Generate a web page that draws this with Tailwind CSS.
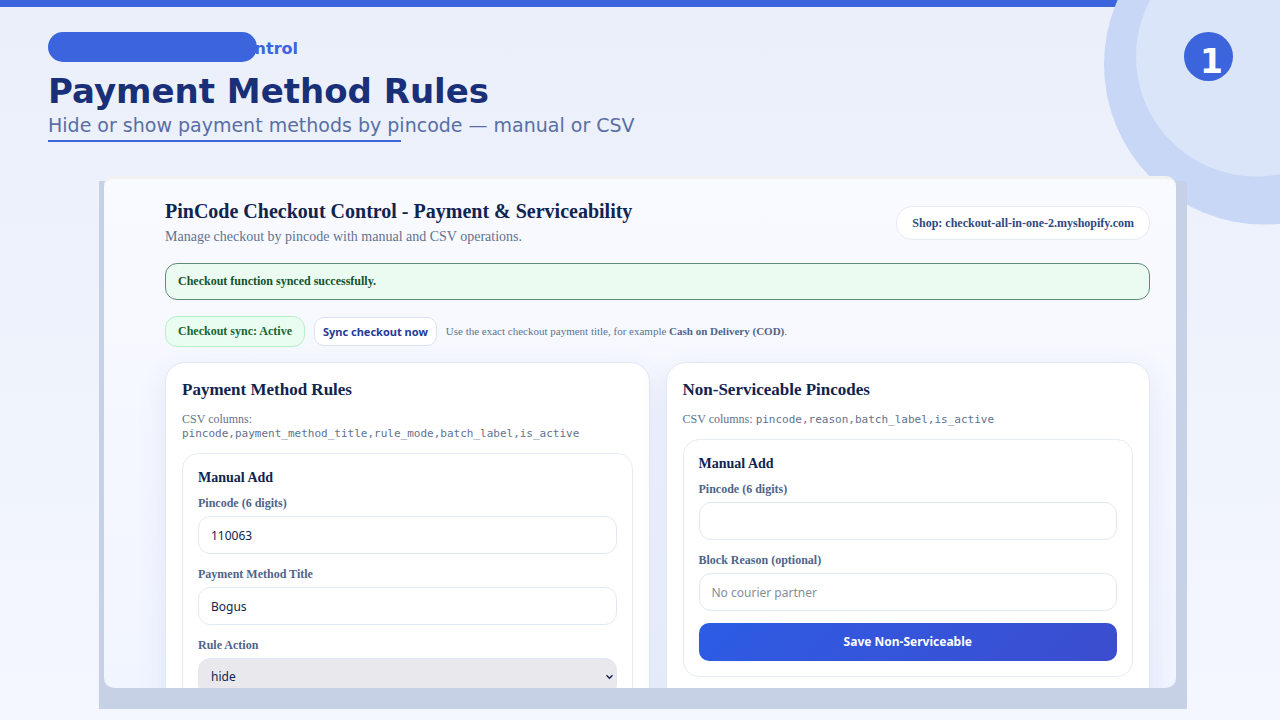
<!DOCTYPE html>
<html lang="en">
<head>
  <meta charset="UTF-8" />
  <meta name="viewport" content="width=device-width, initial-scale=1.0" />
  <title>Payment Method Rules</title>
  <script src="https://cdn.jsdelivr.net/npm/@tailwindcss/browser@4"></script>
</head>
<body class="relative flex flex-col h-screen overflow-hidden bg-linear-to-b from-[#eaeffa] to-[#f4f7ff] font-['DejaVu_Sans',sans-serif]">
  <div class="h-[7px] shrink-0 bg-[#3c64dc]"></div>

  <!-- corner circles -->
  <svg class="absolute top-0 right-0 h-[225px] w-[176px]" viewBox="0 0 176 225">
    <circle cx="160" cy="64.5" r="160" fill="#c8d7f5" />
    <circle cx="152" cy="56.5" r="120" fill="#dae5f9" />
  </svg>
  <div class="absolute top-8 right-[47px] size-[49px] rounded-full bg-[#3c64dc] text-white text-[33px] leading-[60px] font-bold text-center pl-[6px]">1</div>

  <header class="relative px-12 pt-[25px] shrink-0">
    <div class="relative h-[30px] w-[250px]">
      <span class="block text-right text-base leading-[34px] font-bold text-[#3c64dc] whitespace-nowrap">PinCode Checkout Control</span>
      <span class="absolute left-0 top-0 h-[30px] w-[209px] rounded-full bg-[#3c64dc]"></span>
    </div>
    <h1 class="mt-2 text-[34px] leading-[42px] font-bold text-[#192f78]">Payment Method Rules</h1>
    <p class="text-[19px] leading-[26px] text-[#5a6ea5]">Hide or show payment methods by pincode — manual or CSV</p>
    <div class="mt-[2px] h-[2px] w-[353px] bg-[#3c64dc]"></div>
  </header>

  <!-- app window on its backing plate -->
  <div class="relative flex flex-1 min-h-0 mt-[39px] mb-[11px] ml-[99px] mr-[93px] pl-[5px] pr-[11px] pb-[21px] bg-[#c7d1e5]">
    <main class="flex-1 min-w-0 -mt-[5px] overflow-hidden rounded-[10px] border-t-3 border-[#f1f1f0] bg-linear-to-b from-[#f9faff] to-[#f1f5ff] pl-[61px] pr-[26px] pt-5 font-['Liberation_Serif',serif] text-[#10244f]">

      <div class="flex items-center justify-between">
        <div>
          <h2 class="text-xl leading-6 font-bold">PinCode Checkout Control - Payment &amp; Serviceability</h2>
          <p class="mt-1 text-sm leading-5 text-[#61728f]">Manage checkout by pincode with manual and CSV operations.</p>
        </div>
        <div class="rounded-2xl border border-[#e6eaf5] bg-white px-[15px] py-2 text-xs leading-4 font-bold text-[#304a80]">Shop: checkout-all-in-one-2.myshopify.com</div>
      </div>

      <div class="mt-4 rounded-xl border border-[#5f8a74] bg-[#ecfbf1] px-3 py-[10px] text-xs leading-[15px] font-bold text-[#14532d]">Checkout function synced successfully.</div>

      <div class="mt-4 flex items-center gap-[9px]">
        <span class="rounded-xl border border-[#b5efcb] bg-[#eafdf1] px-3 py-[7px] text-xs leading-[15px] font-bold text-[#166534]">Checkout sync: Active</span>
        <button type="button" class="rounded-[10px] border border-[#dbe3f3] bg-white px-2 py-[6px] font-['Noto_Sans',sans-serif] text-[11px] leading-[15px] font-bold text-[#1e3a9a]">Sync checkout now</button>
        <span class="text-[11px] leading-[15px] text-[#61728f]">Use the exact checkout payment title, for example <b class="text-[#50648a]">Cash on Delivery (COD)</b>.</span>
      </div>

      <div class="mt-[15px] grid grid-cols-2 items-start gap-4">
        <section class="rounded-[20px] border border-[#e2e8f5] bg-white px-4 pt-[17px] pb-4 shadow-[0_10px_30px_rgba(60,80,170,0.1)]">
          <h3 class="text-[17px] leading-5 font-bold">Payment Method Rules</h3>
          <p class="mt-3 text-xs leading-[14px] text-[#61728f]">CSV columns:<br /><code class="font-['DejaVu_Sans_Mono',monospace] text-[11px]">pincode,payment_method_title,rule_mode,batch_label,is_active</code></p>
          <form class="mt-3 rounded-2xl border border-[#e6ebf5] px-[15px] pt-4 pb-[15px]">
            <h4 class="text-sm leading-4 font-bold">Manual Add</h4>
            <label for="pincode" class="mt-[9px] block text-xs leading-4 font-bold text-[#50648a]">Pincode (6 digits)</label>
            <input id="pincode" type="text" value="110063" class="mt-[5px] block h-[38px] w-full rounded-xl border border-[#e2e8f3] bg-white px-3 font-['Noto_Sans',sans-serif] text-xs" />
            <label for="method" class="mt-3 block text-xs leading-4 font-bold text-[#50648a]">Payment Method Title</label>
            <input id="method" type="text" value="Bogus" class="mt-[5px] block h-[38px] w-full rounded-xl border border-[#e2e8f3] bg-white px-3 font-['Noto_Sans',sans-serif] text-xs" />
            <label for="action" class="mt-3 block text-xs leading-4 font-bold text-[#50648a]">Rule Action</label>
            <div class="relative mt-[5px]">
              <select id="action" class="block h-[38px] w-full appearance-none rounded-xl border border-[#e2e8f3] bg-[#e8e8ed] px-3 font-['Noto_Sans',sans-serif] text-xs">
                <option>hide</option>
                <option>show</option>
              </select>
              <svg class="pointer-events-none absolute right-1 top-4 h-[6px] w-[7px]" viewBox="0 0 7 6" fill="none" stroke="#10244f" stroke-width="1.4"><path d="M.5 1.2 3.5 4.2 6.5 1.2" /></svg>
            </div>
          </form>
        </section>

        <section class="rounded-[20px] border border-[#e2e8f5] bg-white px-4 pt-[17px] pb-10 shadow-[0_10px_30px_rgba(60,80,170,0.1)]">
          <h3 class="text-[17px] leading-5 font-bold">Non-Serviceable Pincodes</h3>
          <p class="mt-3 text-xs leading-[14px] text-[#61728f]">CSV columns: <code class="font-['DejaVu_Sans_Mono',monospace] text-[11px]">pincode,reason,batch_label,is_active</code></p>
          <form class="mt-3 rounded-2xl border border-[#e6ebf5] px-[15px] pt-4 pb-[15px]">
            <h4 class="text-sm leading-4 font-bold">Manual Add</h4>
            <label for="blocked" class="mt-[9px] block text-xs leading-4 font-bold text-[#50648a]">Pincode (6 digits)</label>
            <input id="blocked" type="text" class="mt-[5px] block h-[38px] w-full rounded-xl border border-[#e2e8f3] bg-white px-3 font-['Noto_Sans',sans-serif] text-xs" />
            <label for="reason" class="mt-3 block text-xs leading-4 font-bold text-[#50648a]">Block Reason (optional)</label>
            <input id="reason" type="text" placeholder="No courier partner" class="mt-[5px] block h-[38px] w-full rounded-xl border border-[#e2e8f3] bg-white px-3 font-['Noto_Sans',sans-serif] text-xs placeholder:text-[#858d9c]" />
            <button type="button" class="mt-3 block h-[38px] w-full rounded-[10px] bg-linear-135 from-[#2c5ce5] to-[#3b4dce] font-['Noto_Sans',sans-serif] text-xs font-bold text-white">Save Non-Serviceable</button>
          </form>
        </section>
      </div>
    </main>
  </div>
</body>
</html>
